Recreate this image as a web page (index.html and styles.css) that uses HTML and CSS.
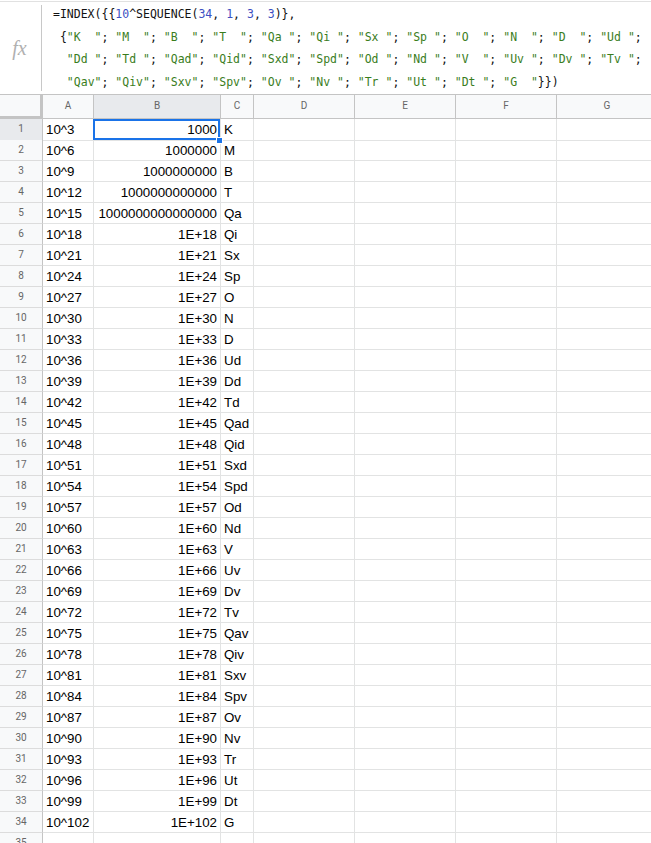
FILE: index.html
```html
<!DOCTYPE html>
<html>
<head>
    <meta charset='utf-8' />
    <title>Suffixes</title>
    <link rel="stylesheet" href="styles.css">
</head>
<body>
    <div id='formulaBar'>
        <div id='fx'>fx</div>
<pre id='formula'>=INDEX({{<span class='n'>10</span>^SEQUENCE(<span class='n'>34</span>, <span class='n'>1</span>, <span class='n'>3</span>, <span class='n'>3</span>)},
 {<span class='s'>"K  "</span>; <span class='s'>"M  "</span>; <span class='s'>"B  "</span>; <span class='s'>"T  "</span>; <span class='s'>"Qa "</span>; <span class='s'>"Qi "</span>; <span class='s'>"Sx "</span>; <span class='s'>"Sp "</span>; <span class='s'>"O  "</span>; <span class='s'>"N  "</span>; <span class='s'>"D  "</span>; <span class='s'>"Ud "</span>;
  <span class='s'>"Dd "</span>; <span class='s'>"Td "</span>; <span class='s'>"Qad"</span>; <span class='s'>"Qid"</span>; <span class='s'>"Sxd"</span>; <span class='s'>"Spd"</span>; <span class='s'>"Od "</span>; <span class='s'>"Nd "</span>; <span class='s'>"V  "</span>; <span class='s'>"Uv "</span>; <span class='s'>"Dv "</span>; <span class='s'>"Tv "</span>;
  <span class='s'>"Qav"</span>; <span class='s'>"Qiv"</span>; <span class='s'>"Sxv"</span>; <span class='s'>"Spv"</span>; <span class='s'>"Ov "</span>; <span class='s'>"Nv "</span>; <span class='s'>"Tr "</span>; <span class='s'>"Ut "</span>; <span class='s'>"Dt "</span>; <span class='s'>"G  "</span>}})</pre>
    </div>

    <div id='sheet'>
        <div class='row head'>
            <div class='corner'></div>
            <div class='ch'>A</div><div class='ch sel'>B</div><div class='ch'>C</div><div class='ch'>D</div><div class='ch'>E</div><div class='ch'>F</div><div class='ch'>G</div>
        </div>
        <div class='row'><div class='rh sel'>1</div><div class='c'>10^3</div><div class='c num active'>1000<span class='handle'></span></div><div class='c'>K</div><div class='c'></div><div class='c'></div><div class='c'></div><div class='c'></div></div>
        <div class='row'><div class='rh'>2</div><div class='c'>10^6</div><div class='c num'>1000000</div><div class='c'>M</div><div class='c'></div><div class='c'></div><div class='c'></div><div class='c'></div></div>
        <div class='row'><div class='rh'>3</div><div class='c'>10^9</div><div class='c num'>1000000000</div><div class='c'>B</div><div class='c'></div><div class='c'></div><div class='c'></div><div class='c'></div></div>
        <div class='row'><div class='rh'>4</div><div class='c'>10^12</div><div class='c num'>1000000000000</div><div class='c'>T</div><div class='c'></div><div class='c'></div><div class='c'></div><div class='c'></div></div>
        <div class='row'><div class='rh'>5</div><div class='c'>10^15</div><div class='c num'>1000000000000000</div><div class='c'>Qa</div><div class='c'></div><div class='c'></div><div class='c'></div><div class='c'></div></div>
        <div class='row'><div class='rh'>6</div><div class='c'>10^18</div><div class='c num'>1E+18</div><div class='c'>Qi</div><div class='c'></div><div class='c'></div><div class='c'></div><div class='c'></div></div>
        <div class='row'><div class='rh'>7</div><div class='c'>10^21</div><div class='c num'>1E+21</div><div class='c'>Sx</div><div class='c'></div><div class='c'></div><div class='c'></div><div class='c'></div></div>
        <div class='row'><div class='rh'>8</div><div class='c'>10^24</div><div class='c num'>1E+24</div><div class='c'>Sp</div><div class='c'></div><div class='c'></div><div class='c'></div><div class='c'></div></div>
        <div class='row'><div class='rh'>9</div><div class='c'>10^27</div><div class='c num'>1E+27</div><div class='c'>O</div><div class='c'></div><div class='c'></div><div class='c'></div><div class='c'></div></div>
        <div class='row'><div class='rh'>10</div><div class='c'>10^30</div><div class='c num'>1E+30</div><div class='c'>N</div><div class='c'></div><div class='c'></div><div class='c'></div><div class='c'></div></div>
        <div class='row'><div class='rh'>11</div><div class='c'>10^33</div><div class='c num'>1E+33</div><div class='c'>D</div><div class='c'></div><div class='c'></div><div class='c'></div><div class='c'></div></div>
        <div class='row'><div class='rh'>12</div><div class='c'>10^36</div><div class='c num'>1E+36</div><div class='c'>Ud</div><div class='c'></div><div class='c'></div><div class='c'></div><div class='c'></div></div>
        <div class='row'><div class='rh'>13</div><div class='c'>10^39</div><div class='c num'>1E+39</div><div class='c'>Dd</div><div class='c'></div><div class='c'></div><div class='c'></div><div class='c'></div></div>
        <div class='row'><div class='rh'>14</div><div class='c'>10^42</div><div class='c num'>1E+42</div><div class='c'>Td</div><div class='c'></div><div class='c'></div><div class='c'></div><div class='c'></div></div>
        <div class='row'><div class='rh'>15</div><div class='c'>10^45</div><div class='c num'>1E+45</div><div class='c'>Qad</div><div class='c'></div><div class='c'></div><div class='c'></div><div class='c'></div></div>
        <div class='row'><div class='rh'>16</div><div class='c'>10^48</div><div class='c num'>1E+48</div><div class='c'>Qid</div><div class='c'></div><div class='c'></div><div class='c'></div><div class='c'></div></div>
        <div class='row'><div class='rh'>17</div><div class='c'>10^51</div><div class='c num'>1E+51</div><div class='c'>Sxd</div><div class='c'></div><div class='c'></div><div class='c'></div><div class='c'></div></div>
        <div class='row'><div class='rh'>18</div><div class='c'>10^54</div><div class='c num'>1E+54</div><div class='c'>Spd</div><div class='c'></div><div class='c'></div><div class='c'></div><div class='c'></div></div>
        <div class='row'><div class='rh'>19</div><div class='c'>10^57</div><div class='c num'>1E+57</div><div class='c'>Od</div><div class='c'></div><div class='c'></div><div class='c'></div><div class='c'></div></div>
        <div class='row'><div class='rh'>20</div><div class='c'>10^60</div><div class='c num'>1E+60</div><div class='c'>Nd</div><div class='c'></div><div class='c'></div><div class='c'></div><div class='c'></div></div>
        <div class='row'><div class='rh'>21</div><div class='c'>10^63</div><div class='c num'>1E+63</div><div class='c'>V</div><div class='c'></div><div class='c'></div><div class='c'></div><div class='c'></div></div>
        <div class='row'><div class='rh'>22</div><div class='c'>10^66</div><div class='c num'>1E+66</div><div class='c'>Uv</div><div class='c'></div><div class='c'></div><div class='c'></div><div class='c'></div></div>
        <div class='row'><div class='rh'>23</div><div class='c'>10^69</div><div class='c num'>1E+69</div><div class='c'>Dv</div><div class='c'></div><div class='c'></div><div class='c'></div><div class='c'></div></div>
        <div class='row'><div class='rh'>24</div><div class='c'>10^72</div><div class='c num'>1E+72</div><div class='c'>Tv</div><div class='c'></div><div class='c'></div><div class='c'></div><div class='c'></div></div>
        <div class='row'><div class='rh'>25</div><div class='c'>10^75</div><div class='c num'>1E+75</div><div class='c'>Qav</div><div class='c'></div><div class='c'></div><div class='c'></div><div class='c'></div></div>
        <div class='row'><div class='rh'>26</div><div class='c'>10^78</div><div class='c num'>1E+78</div><div class='c'>Qiv</div><div class='c'></div><div class='c'></div><div class='c'></div><div class='c'></div></div>
        <div class='row'><div class='rh'>27</div><div class='c'>10^81</div><div class='c num'>1E+81</div><div class='c'>Sxv</div><div class='c'></div><div class='c'></div><div class='c'></div><div class='c'></div></div>
        <div class='row'><div class='rh'>28</div><div class='c'>10^84</div><div class='c num'>1E+84</div><div class='c'>Spv</div><div class='c'></div><div class='c'></div><div class='c'></div><div class='c'></div></div>
        <div class='row'><div class='rh'>29</div><div class='c'>10^87</div><div class='c num'>1E+87</div><div class='c'>Ov</div><div class='c'></div><div class='c'></div><div class='c'></div><div class='c'></div></div>
        <div class='row'><div class='rh'>30</div><div class='c'>10^90</div><div class='c num'>1E+90</div><div class='c'>Nv</div><div class='c'></div><div class='c'></div><div class='c'></div><div class='c'></div></div>
        <div class='row'><div class='rh'>31</div><div class='c'>10^93</div><div class='c num'>1E+93</div><div class='c'>Tr</div><div class='c'></div><div class='c'></div><div class='c'></div><div class='c'></div></div>
        <div class='row'><div class='rh'>32</div><div class='c'>10^96</div><div class='c num'>1E+96</div><div class='c'>Ut</div><div class='c'></div><div class='c'></div><div class='c'></div><div class='c'></div></div>
        <div class='row'><div class='rh'>33</div><div class='c'>10^99</div><div class='c num'>1E+99</div><div class='c'>Dt</div><div class='c'></div><div class='c'></div><div class='c'></div><div class='c'></div></div>
        <div class='row'><div class='rh'>34</div><div class='c'>10^102</div><div class='c num'>1E+102</div><div class='c'>G</div><div class='c'></div><div class='c'></div><div class='c'></div><div class='c'></div></div>
        <div class='row'><div class='rh'>35</div><div class='c'></div><div class='c'></div><div class='c'></div><div class='c'></div><div class='c'></div><div class='c'></div><div class='c'></div></div>
    </div>
</body>
</html>
```

FILE: styles.css
```css
html, body {
    margin: 0;
    padding: 0;
    background: #fff;
}

body {
    width: 651px;
    height: 843px;
    overflow: hidden;
    font-family: 'Liberation Sans', Arial, sans-serif;
}

#formulaBar {
    display: flex;
    height: 93px;
    margin-top: 1px;
    border-top: 1px solid #e1e1e1;
    box-sizing: border-box;
}

#fx {
    flex: none;
    width: 42px;
    margin: 3px 0 3px 0;
    border-right: 1px solid #c8c8c8;
    box-sizing: border-box;
    display: flex;
    align-items: center;
    justify-content: center;
    padding-right: 2px;
    font-family: 'Liberation Serif', serif;
    font-style: italic;
    font-size: 20px;
    color: #b0b0b0;
}

#formula {
    flex: 1;
    margin: 0;
    padding: 1px 0 0 11px;
    overflow: hidden;
    white-space: pre;
    font-family: 'DejaVu Sans Mono', monospace;
    font-size: 11.5px;
    line-height: 22.5px;
    color: #111;
}

#formula .n {
    color: #3c4fc2;
}

#formula .s {
    color: #3a7d1c;
}

#sheet {
    width: 651px;
    overflow: hidden;
}

.row {
    display: grid;
    grid-template-columns: 43px 51px 127px 33px 101px 101px 101px 101px;
    height: 21px;
    width: 658px;
}

.row > div {
    box-sizing: border-box;
    border-right: 1px solid #e2e3e3;
    border-bottom: 1px solid #e2e3e3;
    white-space: nowrap;
    overflow: hidden;
}

.row.head {
    height: 24px;
    border-top: 1px solid #c4c4c4;
}

.head > div {
    background: #f8f9fa;
    border-right-color: #c4c4c4;
    border-bottom-color: #c4c4c4;
    text-align: center;
    font-family: Roboto, 'Liberation Sans', sans-serif;
    font-size: 10px;
    line-height: 22px;
    color: #666;
}

.head .corner {
    border-right: 3px solid #c4c4c4;
    border-bottom: 3px solid #c4c4c4;
}

.head .sel,
.rh.sel {
    background: #e8eaed;
}

.rh {
    background: #f8f9fa;
    text-align: center;
    font-family: Roboto, 'Liberation Sans', sans-serif;
    font-size: 10px;
    line-height: 20px;
    color: #666;
}

.row > .rh {
    border-right-color: #c4c4c4;
    border-bottom-color: #dcdcdc;
}

.c {
    padding: 1px 3px 0 3px;
    font-size: 13.33px;
    line-height: 20px;
    color: #000;
}

.c.num {
    text-align: right;
}

.row > .active {
    position: relative;
    overflow: visible;
}

.active::after {
    content: '';
    position: absolute;
    left: -1px;
    top: 0;
    right: 0;
    bottom: 0;
    border: 2px solid #1a73e8;
}

.handle {
    position: absolute;
    right: -3px;
    bottom: -4px;
    width: 5px;
    height: 5px;
    background: #1a73e8;
    border: 1px solid #fff;
    z-index: 2;
}
```
